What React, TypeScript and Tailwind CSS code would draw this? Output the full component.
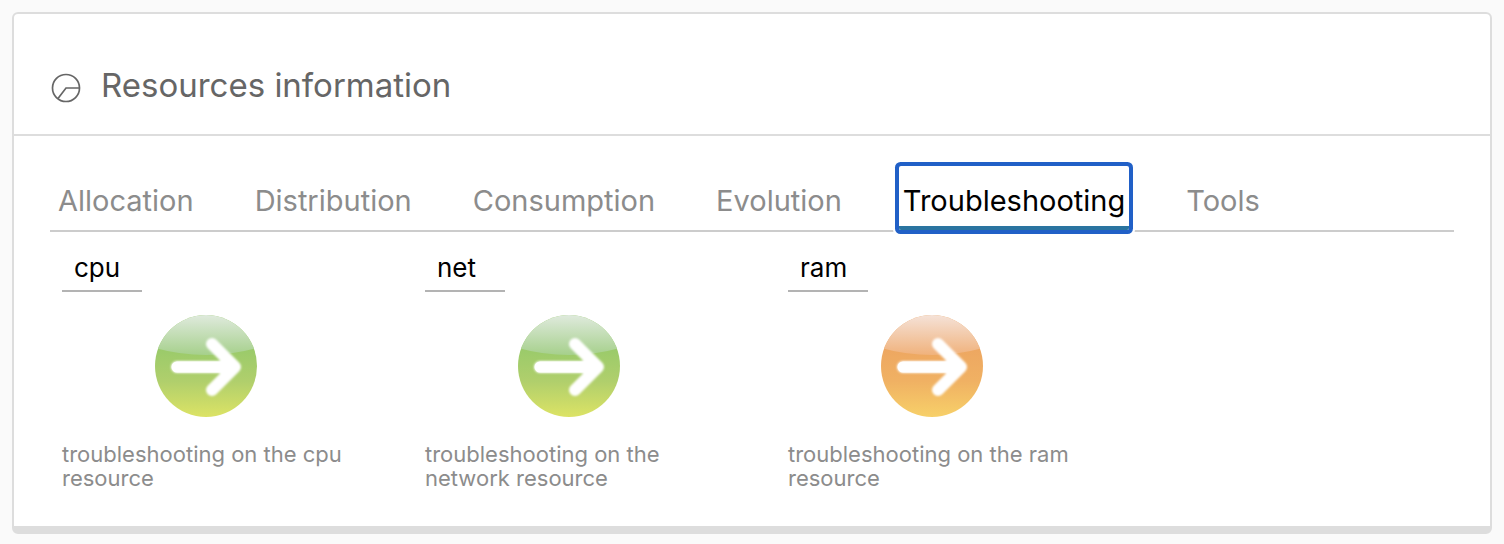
import { useState } from 'react';
import clsx from 'clsx';

const TABS = [
  { id: 'allocation', label: 'Allocation' },
  { id: 'distribution', label: 'Distribution' },
  { id: 'consumption', label: 'Consumption' },
  { id: 'evolution', label: 'Evolution' },
  { id: 'troubleshooting', label: 'Troubleshooting' },
  { id: 'tools', label: 'Tools' },
];

const RESOURCES = [
  { id: 'cpu', text: 'troubleshooting on the cpu resource', status: 'ok' },
  { id: 'net', text: 'troubleshooting on the network resource', status: 'ok' },
  { id: 'ram', text: 'troubleshooting on the ram resource', status: 'warning' },
];

const STATUS_COLORS: Record<string, { gloss: string[]; body: string[] }> = {
  ok: { gloss: ['#dfeadd', '#a6d08c'], body: ['#98ca6a', '#b0cf6c', '#dce365'] },
  warning: { gloss: ['#f5e2d8', '#f0b27c'], body: ['#eda661', '#f0b163', '#f7d069'] },
};

export default function App() {
  const [activeTab, setActiveTab] = useState('troubleshooting');

  return (
    <div className="min-h-screen bg-[#fafafa] p-3 font-['Inter',sans-serif]">
      <section className="rounded-md border-2 border-b-8 border-[#dddddd] bg-white">
        <header className="flex items-center gap-5 border-b-2 border-[#dddddd] px-[37px] pt-[47px] pb-[25px]">
          <PieIcon />
          <h2 className="text-[33px] leading-12 text-[#666666]">Resources information</h2>
        </header>

        <div className="px-9 pt-7">
          <div role="tablist" className="flex gap-[53px] border-b-2 border-[#cccccc] px-1 pt-0.5">
            {TABS.map((t) => (
              <button
                key={t.id}
                role="tab"
                aria-selected={activeTab === t.id}
                onClick={() => setActiveTab(t.id)}
                className={clsx(
                  'h-16 rounded-xs border-b-4 px-1 pt-2.5 text-[29px] leading-9',
                  activeTab === t.id
                    ? 'border-[#2a74a0] text-black shadow-[0_0_0_4px_#2160c7,0_0_0_6px_#ffffff]'
                    : 'border-transparent text-[#8c8c8c]',
                )}
              >
                {t.label}
              </button>
            ))}
          </div>
        </div>

        <div className="grid grid-cols-4 gap-6 pt-3 pb-9 pl-12">
          {RESOURCES.map((r) => (
            <ResourceCard key={r.id} {...r} />
          ))}
        </div>
      </section>
    </div>
  );
}

function ResourceCard({ id, text, status }: { id: string; text: string; status: string }) {
  return (
    <div>
      <input
        aria-label={`${id} resource`}
        defaultValue={id}
        className="block h-12 w-20 border-b-2 border-[#b3b3b3] px-3 text-[26px] leading-9 text-black outline-none"
      />
      <a href={`#${id}`} aria-label={text} className="flex w-72 justify-center pt-[23px] pb-[25px]">
        <ArrowBadge id={id} status={status} />
      </a>
      <p className="pr-6 text-[22px] leading-6 text-[#8c8c8c]">{text}</p>
    </div>
  );
}

function PieIcon() {
  return (
    <svg width="30" height="35" viewBox="0 -5 30 35" fill="none" stroke="#666666" strokeWidth="1.7">
      <circle cx="15" cy="15" r="13.5" />
      <path d="M28.5 15H15L7 25.5" />
    </svg>
  );
}

function ArrowBadge({ id, status }: { id: string; status: string }) {
  const { gloss, body } = STATUS_COLORS[status];
  return (
    <svg width="102" height="102" viewBox="0 0 102 102">
      <defs>
        <linearGradient id={`body-${id}`} x1="0" y1="0" x2="0" y2="1">
          <stop offset="0.3" stopColor={body[0]} />
          <stop offset="0.65" stopColor={body[1]} />
          <stop offset="1" stopColor={body[2]} />
        </linearGradient>
        <linearGradient id={`gloss-${id}`} x1="0" y1="0" x2="0" y2="1">
          <stop offset="0" stopColor={gloss[0]} />
          <stop offset="1" stopColor={gloss[1]} />
        </linearGradient>
        <clipPath id={`clip-${id}`}>
          <circle cx="51" cy="51" r="51" />
        </clipPath>
        <filter id={`soft-${id}`} x="-30%" y="-30%" width="160%" height="160%">
          <feGaussianBlur stdDeviation="0.8" />
        </filter>
      </defs>
      <g clipPath={`url(#clip-${id})`}>
        <rect width="102" height="102" fill={`url(#body-${id})`} />
        <path d="M0 0H102V33Q51 47 0 33Z" fill={`url(#gloss-${id})`} />
      </g>
      <g fill="none" stroke="white" strokeLinecap="round" strokeLinejoin="round">
        <path d="M22 52H74" strokeWidth="11" filter="none" />
        <g filter={`url(#soft-${id})`}>
          <path d="M22 52H74M57 29L80 52L57 75" strokeWidth="12" />
          <path d="M67 43L76 52L67 61Z" fill="white" strokeWidth="4" />
        </g>
      </g>
    </svg>
  );
}
